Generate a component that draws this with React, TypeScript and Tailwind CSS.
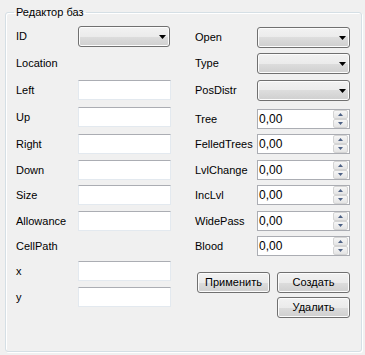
import React from 'react';

const font = { fontFamily: '"Liberation Sans", Arial, sans-serif' };

const ComboBox: React.FC<{ w: string }> = ({ w }) => (
  <div
    className={`${w} h-[21px] rounded-[3px] border border-[#707070] bg-[linear-gradient(to_bottom,#f2f2f2_0%,#ebebeb_50%,#dddddd_50%,#cfcfcf_100%)] shadow-[inset_0_0_0_1px_#fcfcfc] flex items-center justify-end pr-[3px]`}
  >
    <svg width="7" height="4" viewBox="0 0 7 4">
      <path d="M0 0H7L3.5 4Z" fill="#000" />
    </svg>
  </div>
);

const TextBox: React.FC = () => (
  <div className="w-[93px] h-[20px] bg-white border border-[#e3e9ef] border-t-[#abadb3]" />
);

const SpinArrow: React.FC<{ up?: boolean }> = ({ up }) => (
  <div className="h-[9px] w-[15px] rounded-[2px] border border-[#d4d4d4] bg-[linear-gradient(to_bottom,#f6f6f6,#e4e4e4)] flex items-center justify-center">
    <svg width="5" height="3" viewBox="0 0 5 3">
      <path d={up ? 'M0 3H5L2.5 0Z' : 'M0 0H5L2.5 3Z'} fill="#4d6185" />
    </svg>
  </div>
);

const NumericBox: React.FC = () => (
  <div className="w-[93px] h-[20px] bg-white border border-[#abadb3] flex items-center justify-between pl-[1px] pr-[1px]">
    <span className="text-[12px] leading-none text-black">0,00</span>
    <div className="flex flex-col">
      <SpinArrow up />
      <SpinArrow />
    </div>
  </div>
);

const Button: React.FC<{ label: string }> = ({ label }) => (
  <div className="w-[73px] h-[21px] rounded-[3px] border border-[#707070] bg-[linear-gradient(to_bottom,#f2f2f2_0%,#ebebeb_50%,#dddddd_50%,#cfcfcf_100%)] shadow-[inset_0_0_0_1px_#fcfcfc] flex items-center justify-center text-[11px] text-black">
    {label}
  </div>
);

const Row: React.FC<{ h: string; label?: string; children?: React.ReactNode }> = ({ h, label, children }) => (
  <div className={`${h} flex items-start`}>
    <div className="w-[62px] h-[20px] flex items-center text-[11px] text-black whitespace-nowrap">{label}</div>
    {children}
  </div>
);

const App: React.FC = () => {
  return (
    <div className="w-[365px] h-[355px] bg-[#f0f0f0] pl-[5px] pt-[5px]" style={font}>
      <fieldset className="w-[357px] h-[347px] border border-[#d5dfe5] rounded-[3px] shadow-[1px_1px_0_#ffffff,inset_1px_1px_0_#ffffff] pl-[10px]">
        <legend className="ml-[-2px] px-[2px] text-[11px] leading-[14px] text-black">Редактор баз</legend>
        <div className="flex pt-[7px]">
          {/* left column */}
          <div className="flex flex-col w-[179px]">
            <Row h="h-[27px]" label="ID">
              <ComboBox w="w-[92px]" />
            </Row>
            <Row h="h-[27px]" label="Location" />
            <Row h="h-[27px]" label="Left">
              <TextBox />
            </Row>
            <Row h="h-[27px]" label="Up">
              <TextBox />
            </Row>
            <Row h="h-[26px]" label="Right">
              <TextBox />
            </Row>
            <Row h="h-[25px]" label="Down">
              <TextBox />
            </Row>
            <Row h="h-[26px]" label="Size">
              <TextBox />
            </Row>
            <Row h="h-[25px]" label="Allowance">
              <TextBox />
            </Row>
            <Row h="h-[25px]" label="CellPath" />
            <Row h="h-[26px]" label="x">
              <TextBox />
            </Row>
            <Row h="h-[20px]" label="y">
              <TextBox />
            </Row>
          </div>

          {/* right column */}
          <div className="flex flex-col pt-[1px]">
            <Row h="h-[26px]" label="Open">
              <ComboBox w="w-[93px]" />
            </Row>
            <Row h="h-[27px]" label="Type">
              <ComboBox w="w-[93px]" />
            </Row>
            <Row h="h-[29px]" label="PosDistr">
              <ComboBox w="w-[93px]" />
            </Row>
            <Row h="h-[25px]" label="Tree">
              <NumericBox />
            </Row>
            <Row h="h-[26px]" label="FelledTrees">
              <NumericBox />
            </Row>
            <Row h="h-[25px]" label="LvlChange">
              <NumericBox />
            </Row>
            <Row h="h-[26px]" label="IncLvl">
              <NumericBox />
            </Row>
            <Row h="h-[25px]" label="WidePass">
              <NumericBox />
            </Row>
            <Row h="h-[36px]" label="Blood">
              <NumericBox />
            </Row>
            <div className="flex gap-[7px] pl-[2px] h-[25px]">
              <Button label="Применить" />
              <Button label="Создать" />
            </div>
            <div className="flex pl-[82px]">
              <Button label="Удалить" />
            </div>
          </div>
        </div>
      </fieldset>
    </div>
  );
};

export default App;
